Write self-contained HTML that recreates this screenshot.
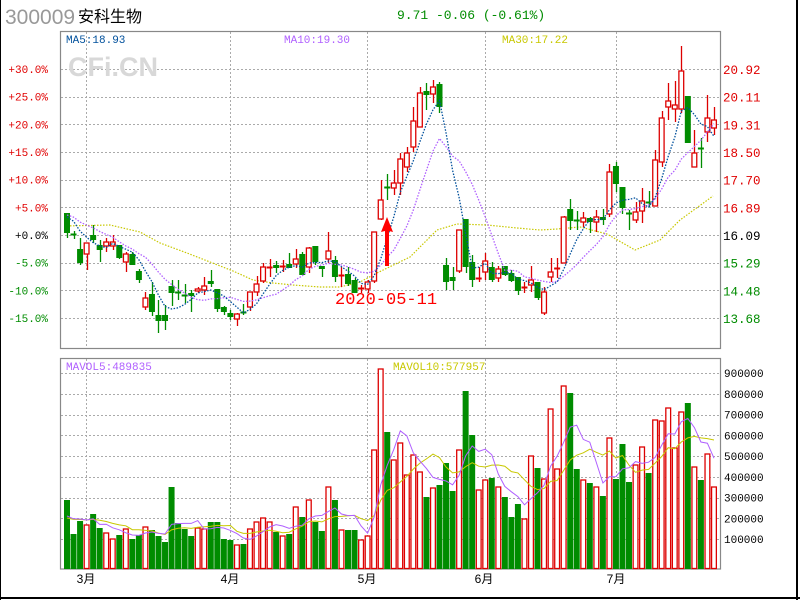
<!DOCTYPE html>
<html><head><meta charset="utf-8"><style>
html,body{margin:0;padding:0;background:#fff;}
body{width:800px;height:600px;overflow:hidden;position:relative;}
svg{position:absolute;left:0;top:0;}
</style></head><body>
<svg id="s" width="800" height="600" xmlns="http://www.w3.org/2000/svg" font-family="'Liberation Mono',monospace">
<rect x="0" y="0" width="800" height="600" fill="#fff"/>
<line x1="0.5" y1="0" x2="0.5" y2="600" stroke="#000" stroke-width="1"/>
<line x1="797" y1="0" x2="797" y2="600" stroke="#000" stroke-width="2"/>
<line x1="0" y1="598" x2="800" y2="598" stroke="#000" stroke-width="2"/>
<text x="5" y="24" font-family="'Liberation Sans',sans-serif" font-size="21" fill="#999">300009</text>
<text x="78" y="22" font-family="'Liberation Sans','Noto Sans CJK SC',sans-serif" font-size="16" fill="#000">安科生物</text>
<text x="397" y="19" font-size="13" fill="#008c00">9.71 -0.06 (-0.61%)</text>
<g id="grid"></g>
<text x="68" y="76" font-family="'Liberation Sans',sans-serif" font-weight="bold" font-size="27" fill="#d8d8d8">CFi.CN</text>
<rect x="60.5" y="31.5" width="660" height="317" fill="none" stroke="#888" stroke-width="1.2"/>
<rect x="60.5" y="358.5" width="660" height="210.5" fill="none" stroke="#888" stroke-width="1.2"/>
<text x="66" y="43" font-size="11" fill="#00509c">MA5:18.93</text>
<text x="284" y="43" font-size="11" fill="#b060ff">MA10:19.30</text>
<text x="502" y="43" font-size="11" fill="#c8c800">MA30:17.22</text>
<text x="66" y="370" font-size="11" fill="#b060ff">MAVOL5:489835</text>
<text x="393" y="370" font-size="11" fill="#c8c800">MAVOL10:577957</text>
<g id="g"></g>
<polygon points="387,217 381,232 385,231 385,266 389,266 389,231 393,232" fill="#f00"/>
<text x="335" y="304" font-size="17" fill="#f00">2020-05-11</text>
<g font-family="'Liberation Sans','Noto Sans CJK SC',sans-serif" font-size="12" fill="#000" text-anchor="middle">
<text x="86" y="583">3月</text><text x="230" y="583">4月</text><text x="367" y="583">5月</text><text x="484" y="583">6月</text><text x="616" y="583">7月</text>
</g>
</svg>
<script>
var NS="http://www.w3.org/2000/svg";
function el(p,t,a,txt){var e=document.createElementNS(NS,t);for(var k in a)e.setAttribute(k,a[k]);if(txt!=null)e.textContent=txt;p.appendChild(e);return e;}
var grid=document.getElementById('grid'),g=document.getElementById('g');
var dash={"stroke":"#aaa","stroke-width":1,"stroke-dasharray":"2,2"};
var L=['+30.0%','+25.0%','+20.0%','+15.0%','+10.0%','+5.0%','+0.0%','-5.0%','-10.0%','-15.0%'];
var R=['20.92','20.11','19.31','18.50','17.70','16.89','16.09','15.29','14.48','13.68'];
for(var i=0;i<10;i++){var y=69+i*27.67;var yy=Math.round(y)+0.5;
 el(grid,'line',Object.assign({x1:61,x2:720,y1:yy,y2:yy},dash));
 var c=i<6?'#e00000':(i==6?'#000':'#008c00');
 el(grid,'text',{x:48,y:y+4,'font-size':11,fill:c,'text-anchor':'end'},L[i]);
 el(grid,'text',{x:723,y:y+5,'font-size':12.5,fill:(i<6?'#e00000':(i==6?'#000':'#008c00'))},R[i]);}
[86,230,367,485,616].forEach(function(x){el(grid,'line',Object.assign({x1:x+.5,x2:x+.5,y1:32,y2:348},dash));el(grid,'line',Object.assign({x1:x+.5,x2:x+.5,y1:359,y2:569},dash));});
for(var k=0;k<9;k++){var y=373+k*20.75;var yy=Math.round(y)+0.5;el(grid,'line',Object.assign({x1:61,x2:720,y1:yy,y2:yy},dash));
 el(grid,'text',{x:724,y:y+4,'font-size':11,fill:'#000'},String((9-k)*100000));}
var D="G 213 233 213 238|G 234 234 231 239|G 249 263 238 265|R 243 254 243 270|G 235 240 225 243|G 245 250 240 262|R 242 246 238 252|R 242 246 235 250|G 245 258 245 259|R 254 262 252 272|G 254 265 252 265|G 271 280 269 283|R 298 307 292 310|G 294 312 282 316|G 315 321 300 333|G 315 321 305 330|G 286 293 280 306|G 292 292 280 300|G 295 295 284 303|G 293 296 290 312|R 289 291 287 293|R 286 290 277 295|G 281 284 270 287|G 289 309 289 312|G 307 312 306 315|G 313 317 310 320|R 314 319 313 326|G 312 312 304 315|R 292 307 292 311|R 284 292 276 296|R 267 281 263 283|R 267 267 259 277|G 265 268 261 273|R 266 266 260 272|G 264 268 253 268|R 259 264 249 268|G 254 275 252 275|R 248 267 247 273|G 246 262 246 265|G 266 269 266 277|R 251 259 232 263|G 260 277 256 282|R 275 275 267 287|G 274 284 267 286|G 280 293 278 293|R 288 288 285 293|R 282 289 280 293|R 232 281 232 283|R 200 219 180 220|G 187 187 174 200|R 183 188 170 195|R 159 183 153 195|R 153 167 147 172|R 121 147 107 152|R 93 127 87 127|G 91 95 83 110|R 87 94 80 103|G 84 107 82 113|G 265 282 258 290|G 277 281 267 290|R 230 271 230 273|G 219 267 219 273|G 262 280 255 287|R 278 278 267 282|R 261 272 253 280|G 267 280 262 282|R 269 278 266 282|G 266 275 266 276|G 273 281 270 282|G 277 291 277 295|R 287 287 282 293|R 280 285 266 292|G 282 298 282 300|R 292 313 287 315|R 272 277 258 282|R 268 268 258 278|R 217 263 216 263|G 209 221 199 230|G 220 220 211 230|R 218 222 212 227|G 218 222 217 233|R 217 222 210 232|G 217 220 209 225|R 172 214 164 217|G 166 184 162 192|G 187 208 187 214|G 213 213 210 230|R 212 220 202 223|R 201 211 188 223|G 202 202 191 207|R 160 206 150 206|R 118 162 111 167|R 101 107 83 120|R 105 109 81 122|R 71 109 46 113|G 96 143 96 143|R 153 167 130 167|G 148 148 138 168|R 118 132 95 142|R 120 128 107 135".split('|');
var V=[500,534,521,525,514,528,533,539,535,529,539,535,527,530,536,542,487,523,529,536,528,529,522,522,539,540,545,544,529,522,518,522,532,536,534,507,517,500,522,531,487,500,530,530,530,540,536,450,369,432,460,443,475,455,472,497,488,485,463,491,450,391,435,490,480,478,487,497,517,504,519,456,468,479,409,469,386,393,469,480,483,487,496,438,479,444,482,465,447,473,420,421,408,448,412,403,467,480,454,487];
var RC='#dd0000',GC='#008c00';
var closes=[];
// MA30
var ma30=[[64,226],[110,225],[140,232],[160,243],[187,253],[210,262],[233,271],[253,280],[273,283],[293,285],[320,287],[340,287],[360,282],[377,273],[410,257],[437,230],[457,224],[487,225],[517,228],[540,230],[557,229],[580,227],[607,234],[635,250],[660,240],[680,220],[713,196]];
el(g,'polyline',{points:ma30.map(function(p){return p.join(',')}).join(' '),fill:'none',stroke:'#c8c800','stroke-width':1.2,'stroke-dasharray':'1.5,1.5'});
for(var i=0;i<D.length;i++){var p=D[i].split(' ');var t=p[0],a=+p[1],b=+p[2],h=+p[3],l=+p[4];
 var x=64+i*6.535,cx=Math.round(x+3)+0.5;var col=t=='R'?RC:GC;
 closes.push(t=='R'?a:b);
 el(g,'line',{x1:cx,x2:cx,y1:h,y2:l,stroke:col,'stroke-width':1.3});
 if(b-a<1.5){el(g,'line',{x1:x,x2:x+6,y1:a+.5,y2:a+.5,stroke:col,'stroke-width':2});}
 else if(t=='R'){el(g,'rect',{x:x+0.6,y:a,width:4.8,height:b-a,fill:'#fff',stroke:col,'stroke-width':1.3});}
 else{el(g,'rect',{x:x,y:a,width:6,height:b-a,fill:col});}
 var vy=V[i];
 if(t=='R'){el(g,'rect',{x:x+0.6,y:vy,width:4.8,height:568.5-vy,fill:'#fff',stroke:col,'stroke-width':1.3});}
 else{el(g,'rect',{x:x,y:vy,width:6,height:569-vy,fill:col});}
}
function ma(arr,n){var o=[];for(var i=0;i<arr.length;i++){var s=0,c=0;for(var j=Math.max(0,i-n+1);j<=i;j++){s+=arr[j];c++;}o.push(s/c);}return o;}
function line(vals,col,da,w){var pts=vals.map(function(v,i){return (64+i*6.535+3).toFixed(1)+','+v.toFixed(1)}).join(' ');var a={points:pts,fill:'none',stroke:col,'stroke-width':w};if(da)a['stroke-dasharray']=da;el(g,'polyline',a);}
var c0=[213,213,213,213,213,213,213,213,213].concat(closes);
var m5=ma(c0,5).slice(9),m10=ma(c0,10).slice(9);
line(m10,'#b060ff','1.5,1.5',1.3);
line(m5,'#00509c','1.5,1.5',1.3);
var v0=[520,520,520,520,520,520,520,520,520].concat(V);
line(ma(v0,10).slice(9),'#c8c800',null,1);
line(ma(v0,5).slice(9),'#b060ff',null,1);
</script>
</body></html>
